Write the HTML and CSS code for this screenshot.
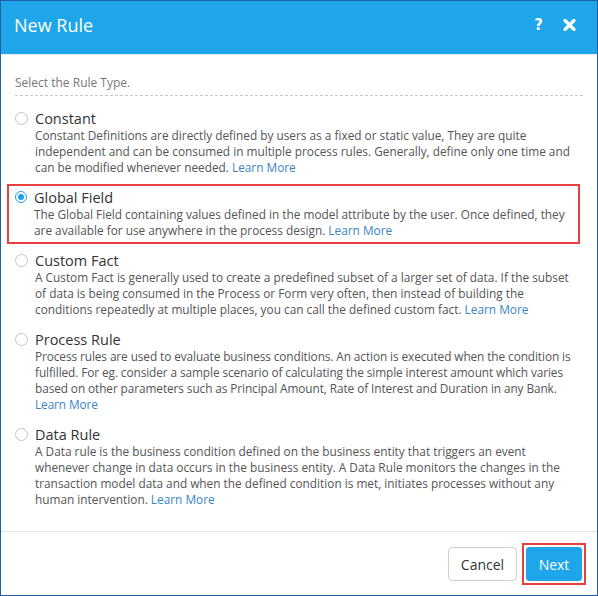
FILE: index.html
```html
<!DOCTYPE html>
<html>
<head>
<meta charset="utf-8">
<link rel="stylesheet" href="styles.css">
</head>
<body>
<div class="dialog">
  <div class="header">
    <div class="title">New Rule</div>
    <div class="actions">
      <span class="help">?</span>
      <svg class="close" width="13" height="12" viewBox="0 0 13 12"><path d="M2 1.5 L11 10.5 M11 1.5 L2 10.5" stroke="#fff" stroke-width="3.2" stroke-linecap="round"/></svg>
    </div>
  </div>
  <div class="body">
    <div class="prompt">Select the Rule Type.</div>
    <div class="options">
      <div class="option">
        <span class="radio"></span>
        <div class="text">
          <div class="name">Constant</div>
          <div class="desc">Constant Definitions are directly defined by users as a fixed or static value, They are quite independent and can be consumed in multiple process rules. Generally, define only one time and can be modified whenever needed. <a class="link">Learn More</a></div>
        </div>
      </div>
      <div class="option selected">
        <span class="radio on"></span>
        <div class="text">
          <div class="name">Global Field</div>
          <div class="desc">The Global Field containing values defined in the model attribute by the user. Once defined, they are available for use anywhere in the process design. <a class="link">Learn More</a></div>
        </div>
      </div>
      <div class="option">
        <span class="radio"></span>
        <div class="text">
          <div class="name">Custom Fact</div>
          <div class="desc">A Custom Fact is generally used to create a predefined subset of a larger set of data. If the subset of data is being consumed in the Process or Form very often, then instead of building the conditions repeatedly at multiple places, you can call the defined custom fact. <a class="link">Learn More</a></div>
        </div>
      </div>
      <div class="option">
        <span class="radio"></span>
        <div class="text">
          <div class="name">Process Rule</div>
          <div class="desc tight">Process rules are used to evaluate business conditions. An action is executed when the condition is fulfilled. For eg. consider a sample scenario of calculating the simple interest amount which varies based on other parameters such as Principal Amount, Rate of Interest and Duration in any Bank. <a class="link">Learn More</a></div>
        </div>
      </div>
      <div class="option">
        <span class="radio"></span>
        <div class="text">
          <div class="name">Data Rule</div>
          <div class="desc">A Data rule is the business condition defined on the business entity that triggers an event whenever change in data occurs in the business entity. A Data Rule monitors the changes in the transaction model data and when the defined condition is met, initiates processes without any human intervention. <a class="link">Learn More</a></div>
        </div>
      </div>
    </div>
  </div>
  <div class="footer">
    <button class="btn cancel">Cancel</button>
    <span class="highlight"><button class="btn next">Next</button></span>
  </div>
</div>
</body>
</html>
```
FILE: styles.css
```css
html, body {
  margin: 0;
  padding: 0;
  background: #fff;
}
.dialog {
  width: 598px;
  height: 596px;
  box-sizing: border-box;
  border: 1px solid #1d5fa6;
  display: flex;
  flex-direction: column;
  font-family: "Open Sans", "DejaVu Sans", sans-serif;
  overflow: hidden;
}
.header {
  height: 48px;
  background: #1ea5ea;
  border-bottom: 1px solid #e8eef2;
  display: flex;
  align-items: center;
  justify-content: space-between;
  padding: 0 21px 5px 13px;
  flex-shrink: 0;
}
.title {
  color: #fff;
  font-size: 18px;
  line-height: 24px;
}
.actions {
  display: flex;
  align-items: center;
  gap: 20px;
}
.help {
  color: #fff;
  font-weight: bold;
  font-size: 15px;
  line-height: 16px;
  font-family: "DejaVu Sans", sans-serif;
}
.close {
  display: block;
}
.body {
  flex: 1;
  padding: 20px 17px 0 6px;
}
.prompt {
  margin: 0 -3px 0 8px;
  font-size: 12px;
  line-height: 16px;
  color: #777;
  padding-bottom: 4px;
  border-bottom: 1px dashed #c8c8c8;
}
.options {
  margin-top: 9px;
}
.option {
  display: flex;
  border: 2px solid transparent;
  padding: 3px 3px 4px 6px;
  margin-bottom: 3px;
}
.option.selected {
  border-color: #e8403e;
}
.radio {
  flex-shrink: 0;
  width: 11px;
  height: 11px;
  border: 1px solid #c4c4c4;
  border-radius: 50%;
  margin: 2px 7px 0 0;
  background: #fff;
  box-sizing: content-box;
  position: relative;
}
.radio.on {
  border: 1.5px solid #1ea0e6;
  width: 10px;
  height: 10px;
}
.radio.on::after {
  content: "";
  position: absolute;
  left: 2px;
  top: 2px;
  width: 6px;
  height: 6px;
  border-radius: 50%;
  background: #1ea0e6;
}
.text {
  flex: 1;
  min-width: 0;
}
.name {
  font-size: 14.5px;
  line-height: 17px;
  color: #333;
}
.desc {
  font-size: 11.83px;
  line-height: 16px;
  color: #555;
  margin-right: -3px;
}
.desc.tight {
  letter-spacing: -0.09px;
}
.link {
  color: #3a84c6;
}
.footer {
  flex-shrink: 0;
  height: 62px;
  border-top: 1px solid #e3e3e3;
  display: flex;
  justify-content: flex-end;
  align-items: center;
  gap: 5px;
  padding: 1px 11px 0 0;
  box-sizing: content-box;
}
.highlight {
  display: flex;
  border: 2px solid #e8403e;
  padding: 2px;
}
.btn {
  font-family: "Open Sans", "DejaVu Sans", sans-serif;
  font-size: 14px;
  height: 34px;
  border-radius: 4px;
  padding: 0;
  cursor: pointer;
}
.cancel {
  width: 69px;
  background: #fff;
  border: 1px solid #cfcfcf;
  color: #333;
}
.next {
  width: 56px;
  background: #1ea5ea;
  border: 1px solid #1ea5ea;
  color: #fff;
  border-radius: 3px;
}
```
